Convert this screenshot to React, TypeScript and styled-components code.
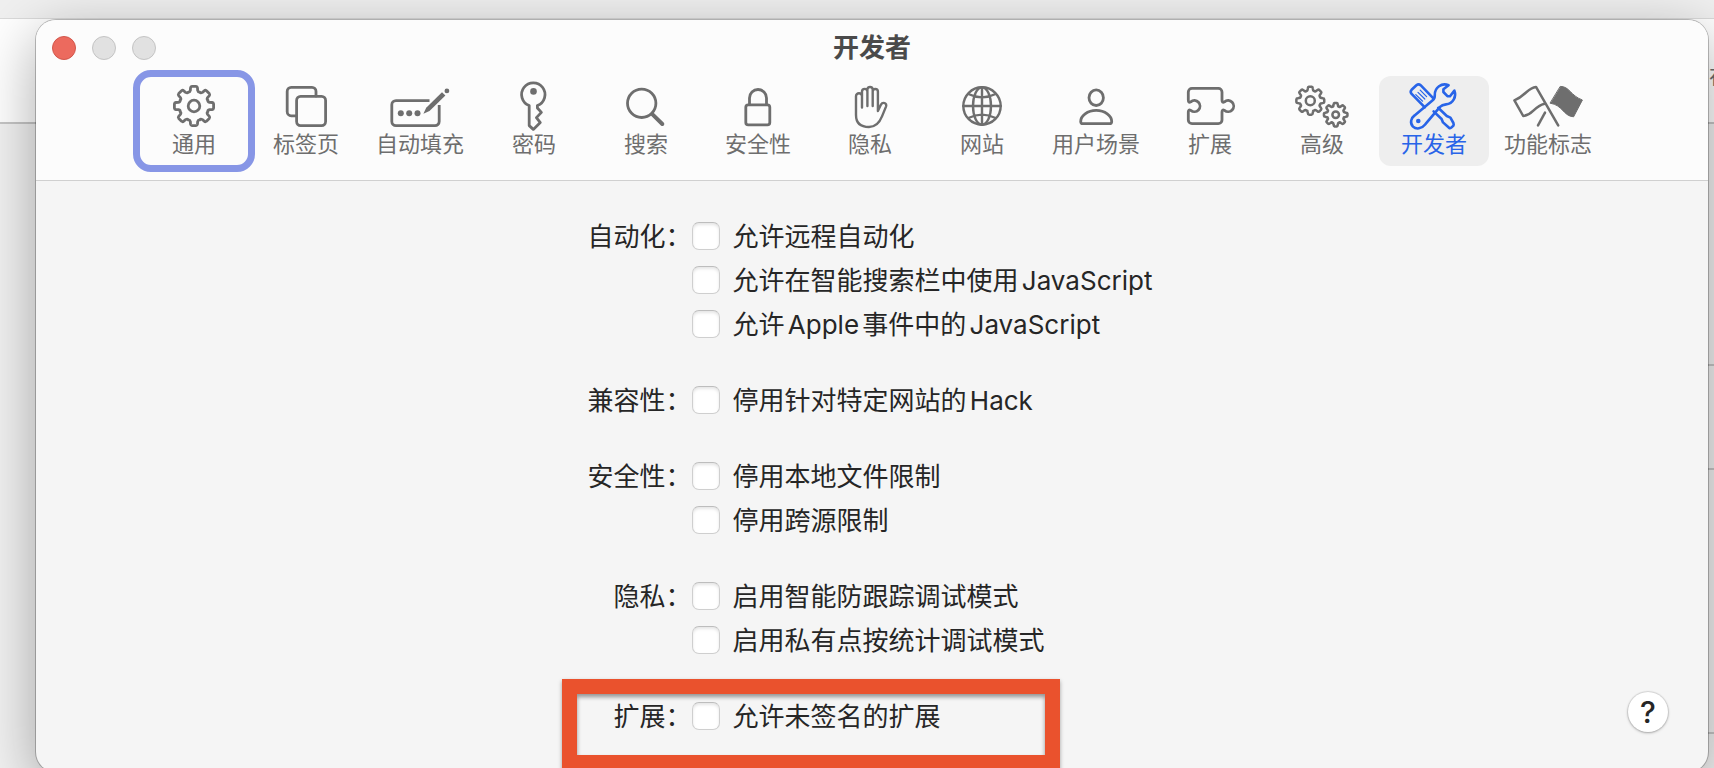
import React, { useState } from "react";
import styled, { createGlobalStyle } from "styled-components";

const GlobalStyle = createGlobalStyle`
  *, *::before, *::after { box-sizing: border-box; }
  html, body { margin: 0; padding: 0; }
  body {
    overflow: hidden;
    font-family: Inter, "Noto Sans CJK SC", sans-serif;
    color: #262626;
  }
`;

/* ---------- desktop behind the window ---------- */

const Desktop = styled.main`
  position: relative;
  height: 100vh;
  overflow: hidden;
  padding: 20px 6px 0 36px;
  background: linear-gradient(
    #f0f0f0 0 18px,
    #dadada 18px 19px,
    #ffffff 19px 122px,
    #c6c6c6 122px 124px,
    #f2f2f2 124px
  );
`;

const BackRows = styled.div`
  position: absolute;
  top: 124px;
  right: 0;
  bottom: 0;
  width: 20px;
  background: linear-gradient(
    transparent 0 240px,
    #c6c6c6 240px 242px,
    transparent 242px 344px,
    #c6c6c6 344px 346px,
    transparent 346px 608px,
    #c6c6c6 608px 610px,
    transparent 610px
  );
`;

const BackText = styled.span`
  position: absolute;
  top: 64px;
  left: calc(100% - 5px);
  font-size: 22px;
  line-height: 24px;
  color: #6e6e6e;
`;

/* ---------- window ---------- */

const Window = styled.section`
  position: relative;
  overflow: visible;
  border-radius: 20px;
  background: #f5f5f5;
  box-shadow: 0 0 0 1px rgba(0, 0, 0, 0.24), 0 16px 60px rgba(0, 0, 0, 0.34);
`;

const Header = styled.header`
  border-bottom: 1px solid #d0d0d0;
  border-radius: 20px 20px 0 0;
  background: #fcfcfc;
`;

const TitleBar = styled.div`
  display: grid;
  grid-template-columns: 1fr auto 1fr;
  align-items: center;
  height: 56px;
  padding: 0 16px;
`;

const Lights = styled.div`
  display: flex;
  gap: 16px;
`;

const Light = styled.button<{ $close?: boolean }>`
  width: 24px;
  height: 24px;
  padding: 0;
  border: 1px solid ${(p) => (p.$close ? "#d2574c" : "#c4c4c4")};
  border-radius: 50%;
  background: ${(p) => (p.$close ? "#ec6a5e" : "#e1e1e1")};
`;

const Title = styled.h1`
  margin: 0;
  font-size: 26px;
  line-height: 32px;
  font-weight: 700;
  color: #4a4a4a;
`;

const Toolbar = styled.nav`
  display: flex;
  justify-content: center;
  gap: 2px;
  padding-bottom: 14px;
`;

const ToolbarItem = styled.button<{ $active?: boolean; $focused?: boolean }>`
  display: flex;
  flex-direction: column;
  align-items: center;
  min-width: 110px;
  height: 90px;
  padding: 2px 13px 0;
  border: 0;
  border-radius: 12px;
  background: ${(p) => (p.$active ? "#eeeeee" : "transparent")};
  color: ${(p) => (p.$active ? "#2864e8" : "#6e6e6e")};
  outline: ${(p) => (p.$focused ? "7px solid #8796e6" : "none")};
  outline-offset: -1px;
  font-family: inherit;
  font-size: 22px;
  line-height: 20px;
  white-space: nowrap;
`;

const IconSvg = styled.svg`
  display: block;
  width: 80px;
  height: 56px;
  fill: none;
  stroke: currentColor;
  stroke-width: 2.8;
  stroke-linecap: round;
  stroke-linejoin: round;
`;

/* ---------- settings ---------- */

const Content = styled.div`
  display: grid;
  grid-template-columns: 1fr auto 1fr;
  padding: 41px 40px 40px;
`;

const Form = styled.form`
  grid-column: 2;
  display: flex;
  flex-direction: column;
  gap: 48px;
  padding: 0 4px 2px 0;
`;

const Group = styled.div`
  position: relative;
  display: grid;
  grid-template-columns: 104px auto;
`;

const GroupLabel = styled.span`
  height: 28px;
  text-align: right;
  font-size: 26px;
  line-height: 30px;
`;

const Options = styled.div`
  display: flex;
  flex-direction: column;
  gap: 16px;
`;

const Option = styled.label`
  display: flex;
  align-items: flex-start;
  gap: 13px;
  height: 28px;
  font-size: 26px;
  line-height: 30px;
  white-space: nowrap;
  text-autospace: normal;
`;

const Checkbox = styled.input`
  appearance: none;
  width: 28px;
  height: 28px;
  margin: 0;
  border: 1px solid #cfcfcf;
  border-top-color: #bdbdbd;
  border-radius: 7px;
  background: #ffffff;
  box-shadow: inset 0 2px 3px rgba(0, 0, 0, 0.1);

  &:checked {
    background: #2864e8;
  }
`;

const Highlight = styled.div`
  position: absolute;
  top: -23px;
  bottom: -40px;
  left: -26px;
  width: 498px;
  border: 15px solid #ea522d;
  box-shadow: 0 2px 4px rgba(0, 0, 0, 0.35), inset 0 3px 4px rgba(0, 0, 0, 0.4);
  pointer-events: none;
`;

const HelpButton = styled.button`
  grid-column: 3;
  align-self: end;
  justify-self: end;
  width: 40px;
  height: 40px;
  padding: 0;
  border: 0;
  border-radius: 50%;
  background: #ffffff;
  box-shadow: 0 0 1px 1px rgba(0, 0, 0, 0.1), 0 1px 3px rgba(0, 0, 0, 0.25);
  font-family: inherit;
  font-size: 30px;
  line-height: 40px;
  font-weight: 500;
  color: #262626;
`;

/* ---------- icons ---------- */

function gearPath(cx: number, cy: number, outer: number, root: number): string {
  const teeth = 8;
  const step = (Math.PI * 2) / teeth;
  const at = (r: number, a: number) =>
    `${(cx + r * Math.sin(a)).toFixed(2)} ${(cy - r * Math.cos(a)).toFixed(2)}`;
  let d = "";
  for (let i = 0; i < teeth; i++) {
    const a = i * step;
    d += `${i ? "L" : "M"}${at(root + 1, a - 0.23)}`;
    d += `L${at(outer - 1.2, a - 0.19)}Q${at(outer, a - 0.17)} ${at(outer, a - 0.1)}`;
    d += `L${at(outer, a + 0.1)}Q${at(outer, a + 0.17)} ${at(outer - 1.2, a + 0.19)}`;
    d += `L${at(root + 1, a + 0.23)}`;
    d += `Q${at(root - 0.8, a + 0.3)} ${at(root, a + step / 2)}`;
    d += `Q${at(root - 0.8, a + step - 0.3)} ${at(root + 1, a + step - 0.23)}`;
  }
  return d + "Z";
}

const icons: Record<string, React.ReactNode> = {
  general: (
    <>
      <path d={gearPath(40, 28, 19.7, 15)} />
      <circle cx="40" cy="28" r="5.8" />
    </>
  ),
  tabs: (
    <>
      <path d="M30 37.8H25.2a4 4 0 0 1-4-4V13.4a4 4 0 0 1 4-4H46a4 4 0 0 1 4 4V18" />
      <rect x="30.6" y="18.4" width="29" height="29.2" rx="4" />
    </>
  ),
  autofill: (
    <>
      <path strokeLinecap="butt" d="M49.5 22.6H16a4.2 4.2 0 0 0-4.2 4.2v16.7a4.2 4.2 0 0 0 4.2 4.2h39a4.2 4.2 0 0 0 4.2-4.2V27" />
      <g fill="currentColor" stroke="none">
        <circle cx="20.8" cy="35.3" r="3" />
        <circle cx="29.2" cy="35.3" r="3" />
        <circle cx="37.5" cy="35.3" r="3" />
        <path d="M43.4 35.8L46.2 29.8L62 14.2L65.4 17.5L49.5 33Z" />
        <circle cx="66.9" cy="12.9" r="2.4" />
      </g>
    </>
  ),
  passwords: (
    <>
      <path d="M35.2 27.5V47.6L39.3 51.4L46.3 44.6L42.4 39.6L47.4 34.4L43.4 30V27.5A11.7 11.7 0 1 0 35.2 27.5Z" />
      <circle cx="39.5" cy="13.4" r="3.3" fill="currentColor" stroke="none" />
    </>
  ),
  search: (
    <>
      <circle cx="35.7" cy="25.3" r="14.2" />
      <path strokeWidth="4" d="M46.5 36.4L56.3 46" />
    </>
  ),
  security: (
    <>
      <rect x="27.8" y="26.8" width="24" height="20" rx="2.4" />
      <path d="M31.5 26V20a8.5 8.5 0 0 1 17 0V26" />
    </>
  ),
  privacy: (
    <path
      strokeWidth="2.4"
      d="M26 37V18.2a3 3 0 0 1 6 0V29.5M32 18V13.6a2.7 2.7 0 0 1 5.4 0V28M37.4 13V11.2a2.7 2.7 0 0 1 5.3 0V28M42.7 13.6a2.6 2.6 0 0 1 5.2 0V33L51 26.6C52.6 23.6 57.4 24.8 56 28.6L52 38.4C49 46 45 49 39 49C31 49 26 45 26 37"
    />
  ),
  websites: (
    <g strokeWidth="2.4">
      <circle cx="40" cy="28" r="18.7" />
      <ellipse cx="40" cy="28" rx="9" ry="18.7" />
      <path d="M21.3 28H58.7M40 9.3V46.7M26.4 16Q40 22.8 53.6 16M26.4 40Q40 33.2 53.6 40" />
    </g>
  ),
  profiles: (
    <>
      <ellipse cx="40.2" cy="19.7" rx="7.2" ry="7.8" />
      <path d="M40.2 32.4C49 32.4 55.7 38 55.7 43.4Q55.7 45.7 53.4 45.7H27Q24.7 45.7 24.7 43.4C24.7 38 31.4 32.4 40.2 32.4Z" />
    </>
  ),
  extensions: (
    <path d="M18.3 22V14a3.7 3.7 0 0 1 3.7-3.7H48.3a3.7 3.7 0 0 1 3.7 3.7V22Q52 25.2 54.5 23.8A5.6 5.6 0 1 1 54.5 32.4Q52 31 52 34V42a3.7 3.7 0 0 1-3.7 3.7H22a3.7 3.7 0 0 1-3.7-3.7V34Q18.3 31 20.8 32.4A5.6 5.6 0 1 0 20.8 23.8Q18.3 25.2 18.3 22Z" />
  ),
  advanced: (
    <g strokeWidth="2.5">
      <path d={gearPath(28.3, 22.7, 14, 10.6)} />
      <circle cx="28.3" cy="22.7" r="4.5" />
      <path d={gearPath(53.7, 36.7, 11.8, 8.8)} />
      <circle cx="53.7" cy="36.7" r="3.3" />
    </g>
  ),
  developer: (
    <g strokeWidth="2.6">
      <path d="M30.8 29.4L17.4 15.6Q15.9 13.6 17.6 11.8L22.4 7.2Q24.6 5.4 26.6 7.2L39.4 20.4" />
      <path strokeWidth="1.2" d="M21.8 16.6L28.6 23.2M24 14.4L30.8 21M26.2 12.2L32.6 18.6" />
      <path d="M54.6 7.2L49.4 11.2V14L53.4 18.2H56L60.4 12.6C62.6 18.4 59.4 25.6 52 26.4Q48 26.8 46 28.8L31.4 46.2C27.6 51 22.2 51.6 19 48.6C15.6 45 17 40 20.6 37.4L38.4 22.6Q41 20.4 40.8 17C40.6 9.4 47.6 4.4 54.6 7.2Z" />
      <circle cx="24.3" cy="43" r="2.3" fill="currentColor" stroke="none" />
      <path d="M39.6 33.4L47.6 41L49 44.4L55 49.8Q56.4 50.6 57.6 49.4L59.4 47.6Q60 46.4 59.4 45L56.4 39.6L52.8 38L44.2 29.8" />
    </g>
  ),
  flags: (
    <>
      <path strokeWidth="2.5" d="M50.2 47.4L28 8.9C19.6 9.6 18 17.6 6.4 22.4L15.2 38C25.4 37 25.4 28.4 36.6 25.8" />
      <path strokeWidth="2.5" d="M37 34.6L30 47.4" />
      <path fill="currentColor" strokeWidth="1" d="M52.6 8.4C61.4 8.2 62.4 17.6 74.4 22L65.6 38.8C55.4 38.2 54.8 27 42.4 25.2Z" />
    </>
  ),
};

/* ---------- data ---------- */

const panes = [
  { id: "general", name: "通用", focused: true },
  { id: "tabs", name: "标签页" },
  { id: "autofill", name: "自动填充" },
  { id: "passwords", name: "密码" },
  { id: "search", name: "搜索" },
  { id: "security", name: "安全性" },
  { id: "privacy", name: "隐私" },
  { id: "websites", name: "网站" },
  { id: "profiles", name: "用户场景" },
  { id: "extensions", name: "扩展" },
  { id: "advanced", name: "高级" },
  { id: "developer", name: "开发者" },
  { id: "flags", name: "功能标志" },
];

const groups = [
  {
    label: "自动化：",
    options: ["允许远程自动化", "允许在智能搜索栏中使用JavaScript", "允许Apple事件中的JavaScript"],
  },
  { label: "兼容性：", options: ["停用针对特定网站的Hack"] },
  { label: "安全性：", options: ["停用本地文件限制", "停用跨源限制"] },
  { label: "隐私：", options: ["启用智能防跟踪调试模式", "启用私有点按统计调试模式"] },
  { label: "扩展：", options: ["允许未签名的扩展"], highlighted: true },
];

export default function App() {
  const [active, setActive] = useState("developer");

  return (
    <>
      <GlobalStyle />
      <Desktop>
        <BackRows />
        <BackText aria-hidden="true">在</BackText>
        <Window>
          <Header>
            <TitleBar>
              <Lights>
                <Light type="button" $close aria-label="关闭" />
                <Light type="button" aria-label="最小化" />
                <Light type="button" aria-label="缩放" />
              </Lights>
              <Title>开发者</Title>
            </TitleBar>
            <Toolbar>
              {panes.map((pane) => (
                <ToolbarItem
                  key={pane.id}
                  type="button"
                  $active={pane.id === active}
                  $focused={pane.focused}
                  onClick={() => setActive(pane.id)}
                >
                  <IconSvg viewBox="0 0 80 56" aria-hidden="true">
                    {icons[pane.id]}
                  </IconSvg>
                  {pane.name}
                </ToolbarItem>
              ))}
            </Toolbar>
          </Header>
          <Content>
            <Form>
              {groups.map((group, i) => (
                <Group key={group.label} role="group" aria-labelledby={`group-${i}`}>
                  <GroupLabel id={`group-${i}`}>{group.label}</GroupLabel>
                  <Options>
                    {group.options.map((option) => (
                      <Option key={option}>
                        <Checkbox type="checkbox" />
                        <span>{option}</span>
                      </Option>
                    ))}
                  </Options>
                  {group.highlighted && <Highlight />}
                </Group>
              ))}
            </Form>
            <HelpButton type="button" aria-label="帮助">
              ?
            </HelpButton>
          </Content>
        </Window>
      </Desktop>
    </>
  );
}
